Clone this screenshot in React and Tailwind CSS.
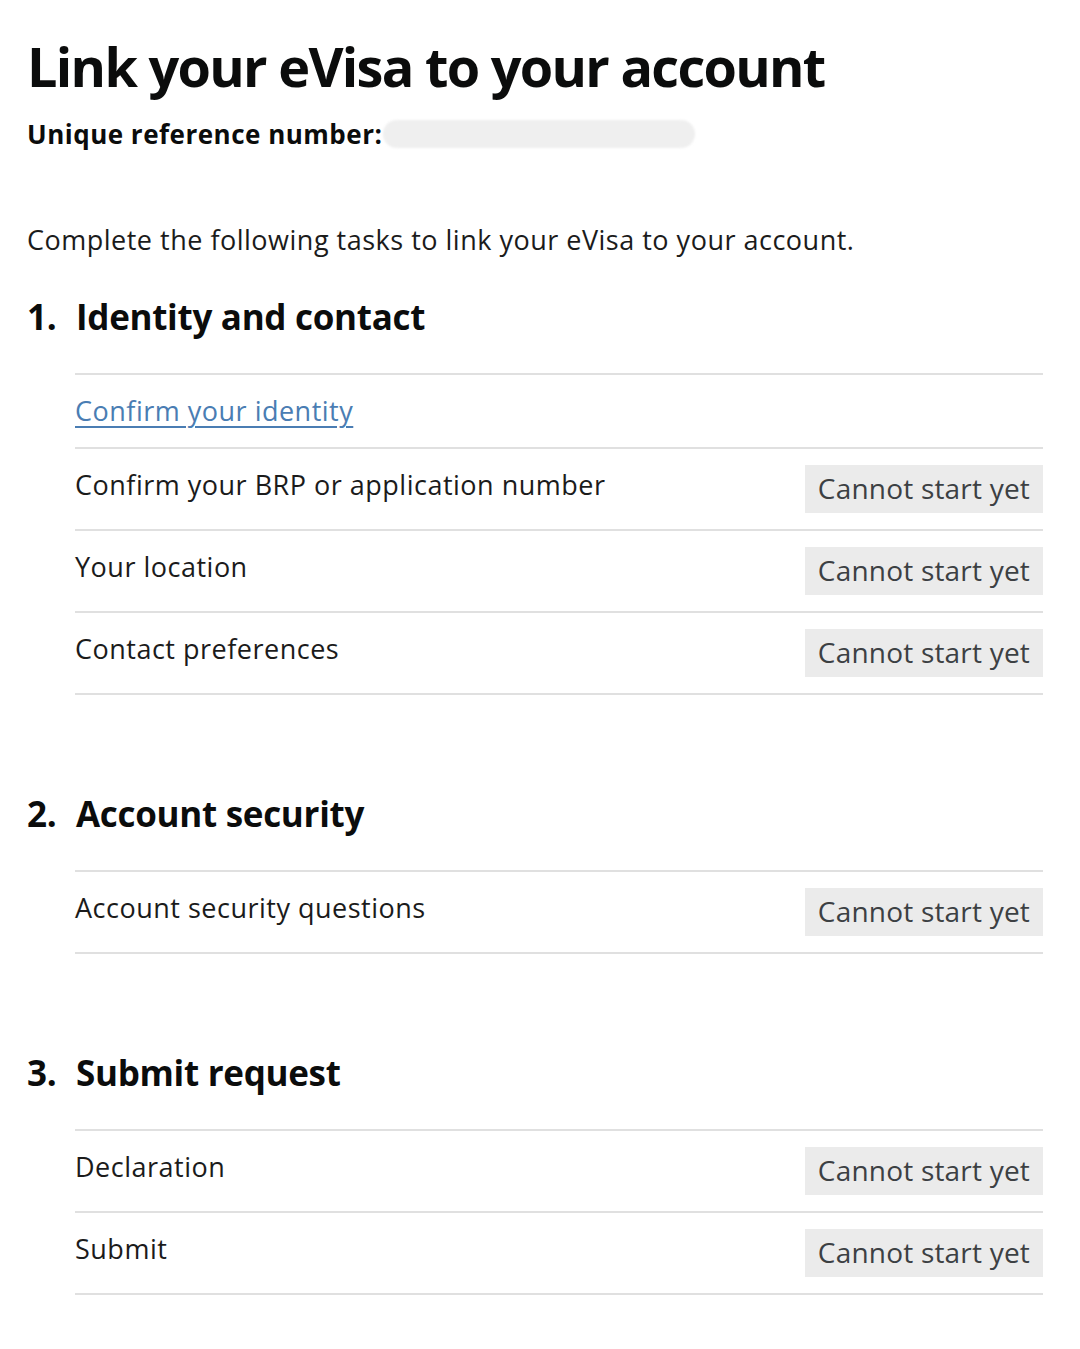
import React from "react";

const sections = [
  {
    num: "1.",
    title: "Identity and contact",
    tasks: [
      { name: "Confirm your identity", link: true },
      { name: "Confirm your BRP or application number" },
      { name: "Your location" },
      { name: "Contact preferences" },
    ],
  },
  {
    num: "2.",
    title: "Account security",
    tasks: [{ name: "Account security questions" }],
  },
  {
    num: "3.",
    title: "Submit request",
    tasks: [{ name: "Declaration" }, { name: "Submit" }],
  },
];

const TaskRow = ({ task }) => (
  <li className="flex items-start justify-between border-b-2 border-[#e0e0e0] py-[16px]">
    {task.link ? (
      <a
        href="#"
        className="text-[27px] leading-[40px] tracking-[0.5px] text-[#4a7db3] underline decoration-[2px] underline-offset-[5px]"
      >
        {task.name}
      </a>
    ) : (
      <span className="text-[27px] leading-[40px] tracking-[0.5px] text-[#1b1b1b]">
        {task.name}
      </span>
    )}
    {!task.link && (
      <span className="bg-[#ebebeb] px-[13px] text-[28px] leading-[46px] pb-[2px] tracking-[0.2px] text-[#3c4043]">
        Cannot start yet
      </span>
    )}
  </li>
);

const App = () => {
  return (
    <main className="min-h-screen bg-white pl-[27px] pr-[37px] pt-[28px] pb-[40px] font-['Open_Sans',sans-serif] text-[#0b0c0c]">
      <h1 className="text-[54px] font-bold leading-[76px] tracking-[-1.7px]">
        Link your eVisa to your account
      </h1>
      <p className="mt-[12px] flex items-center text-[26px] font-bold leading-[36px] tracking-[0.5px]">
        Unique reference number:
        <span className="ml-[1px] inline-block h-[28px] w-[312px] rounded-full bg-[#efefef] blur-[1px]" />
      </p>
      <p className="mt-[70px] text-[27px] leading-[36px] tracking-[0.5px] text-[#1b1b1b]">
        Complete the following tasks to link your eVisa to your account.
      </p>

      {sections.map((s, i) => (
        <section key={s.num} className={i === 0 ? "mt-[33px]" : "mt-[93px]"}>
          <h2 className="flex text-[35px] font-bold leading-[52px] tracking-[-0.3px]">
            <span className="w-[49px]">{s.num}</span>
            <span>{s.title}</span>
          </h2>
          <ul className="ml-[48px] mt-[30px] border-t-2 border-[#e0e0e0]">
            {s.tasks.map((t) => (
              <TaskRow key={t.name} task={t} />
            ))}
          </ul>
        </section>
      ))}
    </main>
  );
};

export default App;
